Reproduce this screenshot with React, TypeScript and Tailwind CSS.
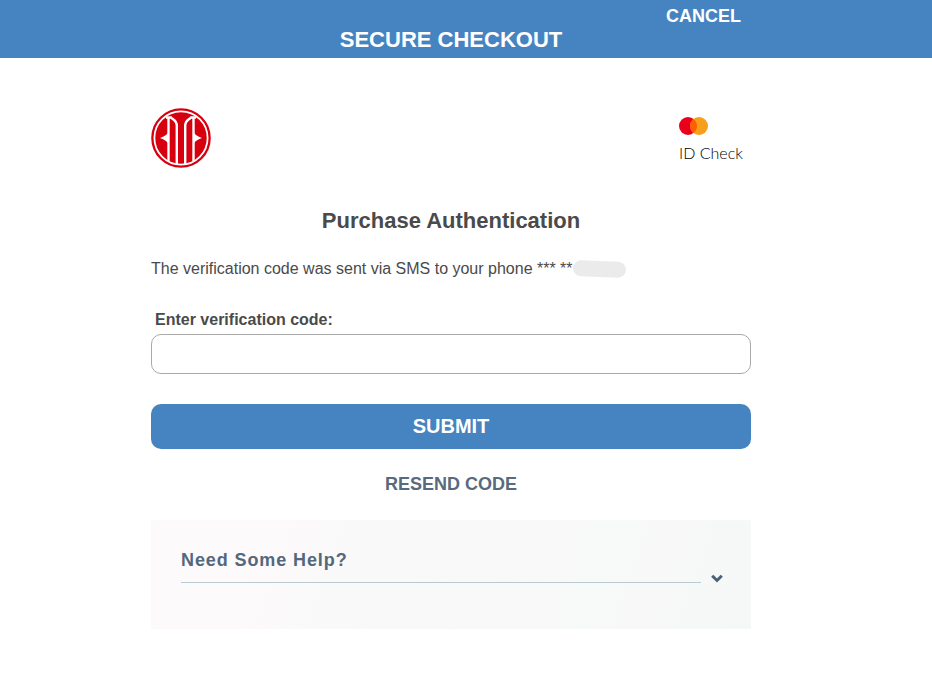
import React, { useState } from 'react';

function BankLogo() {
  return (
    <svg viewBox="0 0 60 60" className="h-[60px] w-[60px]" role="img" aria-label="Bank">
      <circle cx="30" cy="30" r="29.8" fill="#d7000f" />
      <circle cx="30" cy="30" r="26.6" fill="none" stroke="#fff" strokeWidth="1.8" />
      <g fill="none" stroke="#fff" strokeWidth="2.4">
        <path d="M17.500 10V53" />
        <path d="M42.500 10V53" />
        <path d="M15 9.500H20C22 12 25.800 12 25.800 18V56" />
        <path d="M45 9.500H40C38 12 34.200 12 34.200 18V56" />
      </g>
      <path d="M17.500 23C16.500 27 14.500 27.500 9 30C14.500 32.500 16.500 33 17.500 37Z" fill="#fff" />
      <path d="M42.500 23C43.500 27 45.500 27.500 51 30C45.500 32.500 43.500 33 42.500 37Z" fill="#fff" />
    </svg>
  );
}

function IdCheckLogo() {
  return (
    <div className="flex w-[72px] flex-col pt-1">
      <svg viewBox="0 0 30 18" className="h-[18px] w-[30px]" aria-hidden="true">
        <circle cx="9" cy="9" r="9" fill="#eb001b" />
        <circle cx="20" cy="9" r="9" fill="#f79e1b" />
        <path d="M14.500 1.900A9 9 0 0 1 14.500 16.100A9 9 0 0 1 14.500 1.900Z" fill="#ff5f00" />
      </svg>
      <span className="mt-2 font-[Lato,sans-serif] text-base leading-5 font-light text-black">ID Check</span>
    </div>
  );
}

export default function App() {
  const [code, setCode] = useState('');
  const [helpOpen, setHelpOpen] = useState(false);

  return (
    <div className="min-h-screen bg-white font-['Liberation_Sans',Arial,sans-serif] text-[#4a4a4a]">
      {/* Header */}
      <header className="bg-[#4684c1] pr-[30px] text-white">
        <div className="mx-auto flex max-w-[600px] flex-col pt-1 pb-1">
          <button type="button" className="mr-[10px] self-end text-lg leading-6 font-bold">
            CANCEL
          </button>
          <h1 className="pb-[2px] text-center text-[22px] leading-6 font-bold">SECURE CHECKOUT</h1>
        </div>
      </header>

      {/* Content */}
      <main className="pt-[50px] pr-[30px] pb-12">
        <div className="mx-auto max-w-[600px]">
          <div className="flex items-center justify-between">
            <BankLogo />
            <IdCheckLogo />
          </div>

          <h2 className="mt-9 text-center text-[22px] leading-[34px] font-bold">Purchase Authentication</h2>

          <p className="mt-[19px] flex items-center text-base leading-6">
            The verification code was sent via SMS to your phone *** **
            <span className="h-4 w-[53px] rotate-2 rounded-full bg-[#ebebeb]" />
          </p>

          <form className="mt-[27px]" onSubmit={(e) => e.preventDefault()}>
            <label htmlFor="code" className="block pl-1 text-base leading-6 font-bold">
              Enter verification code:
            </label>
            <input
              id="code"
              type="text"
              value={code}
              onChange={(e) => setCode(e.target.value)}
              className="mt-[2px] block h-10 w-full rounded-[10px] border border-[#aaa] bg-white px-3"
            />
            <button
              type="submit"
              className="mt-[30px] block h-[45px] w-full rounded-[10px] bg-[#4684c1] pb-[2px] text-xl font-bold text-white"
            >
              SUBMIT
            </button>
            <button type="button" className="mx-auto mt-[22px] block text-lg leading-[26px] font-bold text-[#5a6a7e]">
              RESEND CODE
            </button>
          </form>

          {/* Help */}
          <section className="mt-[23px] bg-linear-[110deg] from-[#fdfafb] via-[#f9f9f9] to-[#f6f8f7] pt-7 pr-7 pb-[46px] pl-[30px]">
            <button
              type="button"
              aria-expanded={helpOpen}
              onClick={() => setHelpOpen(!helpOpen)}
              className="flex w-full items-end text-left"
            >
              <span className="flex-1 border-b border-[#b9cbd0] pb-[10px] text-lg leading-6 font-bold tracking-wider text-[#54687d]">
                Need Some Help?
              </span>
              <svg viewBox="0 0 12 10" className="ml-[10px] h-[10px] w-3" aria-hidden="true">
                <path d="M1.200 2.800L6 7.500L10.800 2.800" fill="none" stroke="#4c6078" strokeWidth="3" />
              </svg>
            </button>
          </section>
        </div>
      </main>
    </div>
  );
}
